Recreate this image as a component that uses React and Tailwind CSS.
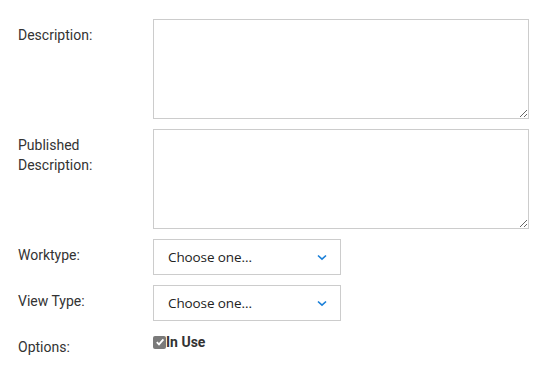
import React from "react";

function Select() {
  return (
    <div className="relative flex h-[36px] w-[188px] items-center border border-[#cccccc] bg-white pl-[14px] pr-[12px]">
      <span className="flex-1 text-[13.5px] tracking-[-0.1px] text-[#222] [font-family:'Open_Sans','Noto_Sans',sans-serif]">Choose one...</span>
      <svg width="10" height="7" viewBox="0 0 10 7" className="mr-[1px]">
        <path d="M1 1.5 L5 5.2 L9 1.5" fill="none" stroke="#1a7fd8" strokeWidth="1.6" />
      </svg>
    </div>
  );
}

export default function App() {
  const label = "pl-[18px] pt-[6px] text-[14px] leading-[20px] text-[#333]";
  return (
    <div className="min-h-[374px] w-[542px] bg-white pt-[19px] [font-family:Roboto,sans-serif]">
      <div className="grid grid-cols-[153px_1fr] gap-y-[10px]">
        <div className={label}>Description:</div>
        <div>
          <textarea className="block h-[100px] w-[376px] border border-[#cccccc] bg-white outline-none" />
        </div>
        <div className={label}>
          Published
          <br />
          Description:
        </div>
        <div>
          <textarea className="block h-[100px] w-[376px] border border-[#cccccc] bg-white outline-none" />
        </div>
        <div className={label}>Worktype:</div>
        <Select />
        <div className={label}>View Type:</div>
        <Select />
        <div className={label}>Options:</div>
        <div className="flex h-[20px] items-center pt-[2px]">
          <span className="flex h-[13px] w-[13px] items-center justify-center rounded-[2px] bg-[#7a7a7a]">
            <svg width="10" height="10" viewBox="0 0 10 10">
              <path d="M1.8 5.2 L4 7.4 L8.4 2.4" fill="none" stroke="white" strokeWidth="1.8" />
            </svg>
          </span>
          <span className="text-[14px] font-bold text-[#333]">In Use</span>
        </div>
      </div>
    </div>
  );
}
